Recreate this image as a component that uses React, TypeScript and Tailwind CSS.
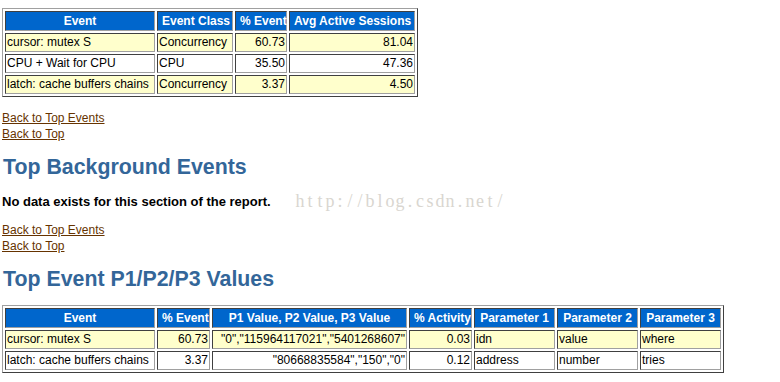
import React from "react";

const th =
  "h-[20px] border border-t-[#404040] border-l-[#404040] border-b-[#a0a0a0] border-r-[#a0a0a0] bg-[#0066cc] text-white font-bold text-[12px] leading-[18px] px-[4px] py-0 text-center whitespace-nowrap";
const tdBase =
  "h-[19px] border border-t-[#404040] border-l-[#404040] border-b-[#a0a0a0] border-r-[#a0a0a0] text-black text-[12px] leading-[17px] px-[1px] py-0 whitespace-nowrap";
const tableCls =
  "table-fixed border-separate border-spacing-[2px] border border-t-[#a0a0a0] border-l-[#a0a0a0] border-b-[#404040] border-r-[#404040] ml-[2px]";

function Cell({ v, right, c }: { v: string; right?: boolean; c: boolean }) {
  return (
    <td className={`${tdBase} ${c ? "bg-[#ffffcc]" : "bg-white"} ${right ? "text-right" : "text-left"}`}>{v}</td>
  );
}

const Links = () => (
  <div className="text-[12px] leading-[16px] ml-[2px]">
    <div>
      <a href="#" className="text-[#663300] underline">Back to Top Events</a>
    </div>
    <div>
      <a href="#" className="text-[#663300] underline">Back to Top</a>
    </div>
  </div>
);

const watermark = "http://blog.csdn.net/";

export default function App() {
  const t1 = [
    ["cursor: mutex S", "Concurrency", "60.73", "81.04"],
    ["CPU + Wait for CPU", "CPU", "35.50", "47.36"],
    ["latch: cache buffers chains", "Concurrency", "3.37", "4.50"],
  ];
  const t2 = [
    ["cursor: mutex S", "60.73", '"0","115964117021","5401268607"', "0.03", "idn", "value", "where"],
    ["latch: cache buffers chains", "3.37", '"80668835584","150","0"', "0.12", "address", "number", "tries"],
  ];
  return (
    <div className="relative w-[780px] h-[382px] bg-white overflow-hidden font-['Liberation_Sans',Arial,sans-serif]">
      <div className="pt-[8px]">
        <table className={`${tableCls} w-[416px]`}>
          <thead>
            <tr>
              <th className={`${th} w-[150px]`}>Event</th>
              <th className={`${th} w-[76px]`}>Event Class</th>
              <th className={`${th} w-[52px]`}>% Event</th>
              <th className={`${th} w-[126px]`}>Avg Active Sessions</th>
            </tr>
          </thead>
          <tbody>
            {t1.map((r, i) => (
              <tr key={i}>
                <Cell v={r[0]} c={i % 2 === 0} />
                <Cell v={r[1]} c={i % 2 === 0} />
                <Cell v={r[2]} right c={i % 2 === 0} />
                <Cell v={r[3]} right c={i % 2 === 0} />
              </tr>
            ))}
          </tbody>
        </table>
      </div>
      <div className="mt-[13px]">
        <Links />
      </div>
      <h2 className="mt-[13px] ml-[3px] text-[21.33px] leading-[24px] font-bold text-[#336699]">Top Background Events</h2>
      <p className="mt-[15px] ml-[2px] text-[13px] leading-[16px] font-bold text-black">
        No data exists for this section of the report.
      </p>
      <div className="mt-[12px]">
        <Links />
      </div>
      <h2 className="mt-[13px] ml-[3px] text-[21.33px] leading-[24px] font-bold text-[#336699]">Top Event P1/P2/P3 Values</h2>
      <div className="mt-[14px]">
        <table className={`${tableCls} w-[722px]`}>
          <thead>
            <tr>
              <th className={`${th} w-[150px]`}>Event</th>
              <th className={`${th} w-[53px]`}>% Event</th>
              <th className={`${th} w-[195px]`}>P1 Value, P2 Value, P3 Value</th>
              <th className={`${th} w-[63px]`}>% Activity</th>
              <th className={`${th} w-[81px]`}>Parameter 1</th>
              <th className={`${th} w-[81px]`}>Parameter 2</th>
              <th className={`${th} w-[81px]`}>Parameter 3</th>
            </tr>
          </thead>
          <tbody>
            {t2.map((r, i) => (
              <tr key={i}>
                <Cell v={r[0]} c={i % 2 === 0} />
                <Cell v={r[1]} right c={i % 2 === 0} />
                <Cell v={r[2]} right c={i % 2 === 0} />
                <Cell v={r[3]} right c={i % 2 === 0} />
                <Cell v={r[4]} c={i % 2 === 0} />
                <Cell v={r[5]} c={i % 2 === 0} />
                <Cell v={r[6]} c={i % 2 === 0} />
              </tr>
            ))}
          </tbody>
        </table>
      </div>
      <div className="absolute left-[295px] top-[192px] flex text-[18px] leading-[18px] text-[#d9d6d0] font-['Liberation_Serif',serif] pointer-events-none">
        {watermark.split("").map((ch, i) => (
          <span key={i} className="inline-block w-[10px] text-center">
            {ch}
          </span>
        ))}
      </div>
    </div>
  );
}
